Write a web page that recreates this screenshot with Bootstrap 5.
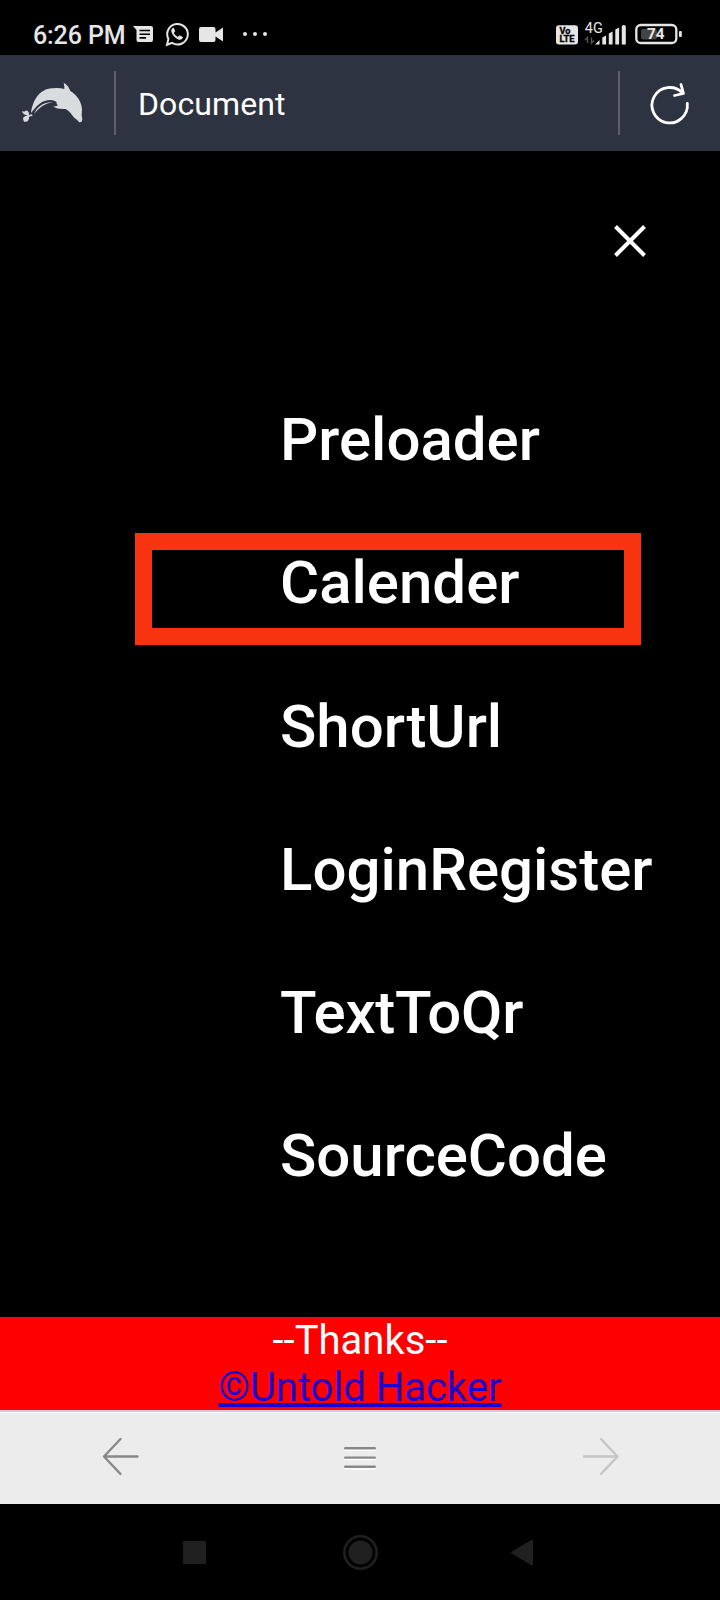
<!DOCTYPE html>
<html lang="en">
<head>
<meta charset="utf-8">
<meta name="viewport" content="width=device-width, initial-scale=1">
<title>Document</title>
<link href="https://cdn.jsdelivr.net/npm/bootstrap@5.3.0/dist/css/bootstrap.min.css" rel="stylesheet">
<style>
  body { font-family: Roboto, "Liberation Sans", sans-serif; background: #000; }
  svg { display: block; flex: none; }
  .screen { width: 720px; height: 1600px; }
  .statusbar { height: 55px; padding: 13px 38px 0 33px; color: #e6e6e6; }
  .clock { font-size: 25px; font-weight: 500; line-height: 44px; width: 100px; letter-spacing: -.1px; padding-top: 1px; }
  .addressbar { height: 96px; background: #2d3341; }
  .logo-cell { width: 114px; }
  .divider { width: 2px; height: 64px; background: #5b606b; }
  .page-title { font-size: 32px; line-height: 40px; padding: 1px 0 0 22px; letter-spacing: .1px; }
  .reload-cell { width: 100px; }
  .overlay-page { height: 1166px; }
  .close-btn { padding: 72px 72px 0 0; height: 217px; }
  .menu-link { height: 143.3px; padding-left: 280px; font-size: 60px; font-weight: 500; line-height: 143.3px; color: #fff; text-decoration: none; white-space: nowrap; }
  .menu-link.tight { letter-spacing: -.25px; }
  .highlight { left: 135px; top: 22px; width: 506px; height: 111.5px; border: 17px solid #f73310; }
  .thanks { height: 93px; background: #f00; font-size: 40px; line-height: 47px; }
  .thanks a { color: #1b00d0; text-decoration-thickness: 4px; text-underline-offset: 2px; text-decoration-skip-ink: none; }
  .toolbar { height: 94px; background: #ececec; border-top: 2px solid #d2cccc; padding: 0 100px 2px; box-shadow: inset 0 1px #fff; }
  .sysnav { height: 96px; padding: 0 185px 0 181px; }
</style>
</head>
<body>
<div class="screen d-flex flex-column overflow-hidden">
  <header class="statusbar d-flex">
    <div class="clock text-nowrap">6:26 PM</div>
    <!-- notifications: message, WhatsApp, video, more -->
    <svg width="140" height="42" viewBox="133 13 140 42" fill="#e6e6e6">
      <path d="M133 26h18q2 0 2 2v12q0 2-2 2h-12.500q-2 0-2-2V30z"/>
      <path d="M139.500 30.500h10.500M139.500 34.200h10.500M139.500 37.900h6.500" stroke="#000" stroke-width="1.600"/>
      <path d="M167 44.800l1.400-5.800A10.300 10.300 0 1 1 172 42.900z" fill="none" stroke="#e6e6e6" stroke-width="2"/>
      <path d="M173 27.800q-2.500 1.700-1.400 4.600 2.200 5.200 7.300 7.300 3 .8 4.200-2.500l-3.500-2-1.800 1.700q-2.700-1.300-4-4l1.400-1.700-1.300-3.300z"/>
      <path d="M201 27h12.500q2 0 2 2v3.400l7.500-5v14l-7.500-5V40q0 2-2 2H201q-2 0-2-2V29q0-2 2-2z"/>
      <circle cx="245" cy="34" r="2"/><circle cx="255" cy="34" r="2"/><circle cx="265" cy="34" r="2"/>
    </svg>
    <!-- network and battery -->
    <svg class="ms-auto" width="127" height="42" viewBox="555 13 127 42" fill="#e6e6e6">
      <rect x="556" y="25.300" width="22" height="19.200" rx="3"/>
      <g fill="#000" stroke="#000" stroke-width=".3" font-family="Roboto" font-weight="700">
        <text x="559.500" y="33.800" font-size="8.500" textLength="11" lengthAdjust="spacingAndGlyphs">Vo</text>
        <text x="559.500" y="42" font-size="8.800" textLength="15" lengthAdjust="spacingAndGlyphs">LTE</text>
      </g>
      <text x="584.800" y="33" font-family="Roboto" font-size="14.500" textLength="18" lengthAdjust="spacingAndGlyphs">4G</text>
      <path d="M587.500 43v-5.500l-2.500 2.500M591.500 37.500V43l2.500-2.500" fill="none" stroke="#555" stroke-width="1.400"/>
      <path d="M595 44.500l4.500-4.500v4.500zM602.300 44.500v-7l3.800-2v9zM608.800 44.500V33.500l3.800-2v13zM615.300 44.500V29.500l3.800-2v17zM621.800 44.500V26.500q0-1.500 2-1.500t2 1.500v18z"/>
      <rect x="636.300" y="25" width="40" height="18" rx="4.500" fill="none" stroke="#e6e6e6" stroke-width="2.300"/>
      <rect x="641" y="29" width="16" height="10.500" rx="2" fill="#444"/>
      <rect x="679" y="31" width="2.800" height="6" rx="1"/>
      <text x="647" y="39" font-family="Roboto" font-size="14.500" font-weight="700" textLength="17.500" lengthAdjust="spacingAndGlyphs">74</text>
    </svg>
  </header>

  <nav class="addressbar d-flex align-items-center text-white">
    <div class="logo-cell">
      <svg width="110" height="70" viewBox="-31 -5 330 210" fill="#d9dcdf">
        <path d="M62 130C66 98 84 58 126 56Q146 54 162 58Q163 50 160 39Q174 46 180 64C202 78 214 98 215 119L214 138Q217 147 215 154Q211 160 205 156L200 150C188 145 182 126 166 118Q142 120 129 111Q140 110 143 107Q136 103 139 98C128 87 104 90 88 102Q77 110 62 130Z"/>
        <path d="M71 134C78 111 104 94 128 98C104 101 86 114 71 134Z"/>
        <path d="M56 137C45 137 37 134 35 124Q42 128 46 123C53 121 57 129 56 137Q65 130 67 139Q58 139 56 142C57 151 52 158 41 156Q39 152 38 146Q42 138 56 137Z"/>
      </svg>
    </div>
    <div class="divider"></div>
    <div class="page-title">Document</div>
    <div class="divider ms-auto"></div>
    <div class="reload-cell d-flex">
      <svg width="100" height="60" viewBox="620 73 100 60" fill="none" stroke="#fff" stroke-width="2.800" stroke-linecap="round" stroke-linejoin="round">
        <path d="M687.300 103.500A17.700 17.700 0 1 1 682.500 93M681 84.500L683.500 93.500L674.500 95.500"/>
      </svg>
    </div>
  </nav>

  <main class="overlay-page">
    <div class="close-btn d-flex justify-content-end align-items-start">
      <svg width="36" height="36" viewBox="0 0 36 36" stroke="#fff" stroke-width="4"><path d="M3.500 3.500L32.500 32.500M32.500 3.500L3.500 32.500"/></svg>
    </div>
    <nav class="nav flex-column flex-nowrap">
      <a class="menu-link" href="#">Preloader</a>
      <a class="menu-link position-relative" href="#">Calender<span class="highlight position-absolute"></span></a>
      <a class="menu-link" href="#">ShortUrl</a>
      <a class="menu-link" href="#">LoginRegister</a>
      <a class="menu-link tight" href="#">TextToQr</a>
      <a class="menu-link" href="#">SourceCode</a>
    </nav>
  </main>

  <footer class="thanks text-center text-white">
    <div>--Thanks--</div>
    <a class="d-block" href="#">©Untold Hacker</a>
  </footer>

  <div class="toolbar d-flex justify-content-between align-items-center">
    <svg width="40" height="40" viewBox="0 0 40 40" fill="none" stroke="#888" stroke-width="2.400" stroke-linecap="round" stroke-linejoin="round"><path d="M20.500 2L4 19.500L20.500 37M4 19.500H37.500"/></svg>
    <svg width="40" height="40" viewBox="0 0 40 40" stroke-width="2.400" stroke-linecap="round"><path d="M5.200 12.700H34.800M5.200 22H34.800M5.200 31.200H34.800" stroke="#fff"/><path d="M5.200 11.300H34.800M5.200 20.600H34.800M5.200 29.800H34.800" stroke="#888"/></svg>
    <svg width="40" height="40" viewBox="0 0 40 40" fill="none" stroke="#c5c5c5" stroke-width="2.400" stroke-linecap="round" stroke-linejoin="round"><path d="M21 2L37.500 19.500L21 37M37.500 19.500H4"/></svg>
  </div>

  <div class="sysnav d-flex justify-content-between align-items-center">
    <svg width="27" height="40" viewBox="0 0 27 40"><rect x="2" y="9" width="23" height="23" rx="1" fill="#202020"/></svg>
    <svg width="40" height="40" viewBox="0 0 40 40"><circle cx="22.500" cy="20.500" r="16.200" fill="none" stroke="#202020" stroke-width="2.600"/><circle cx="22.500" cy="20.500" r="12" fill="#202020"/></svg>
    <svg width="27" height="40" viewBox="0 0 27 40"><path d="M4 20.500L24 8.500V32.500Z" fill="#202020" stroke="#202020" stroke-width="2" stroke-linejoin="round"/></svg>
  </div>
</div>
<script src="https://cdn.jsdelivr.net/npm/bootstrap@5.3.0/dist/js/bootstrap.bundle.min.js"></script>
</body>
</html>
